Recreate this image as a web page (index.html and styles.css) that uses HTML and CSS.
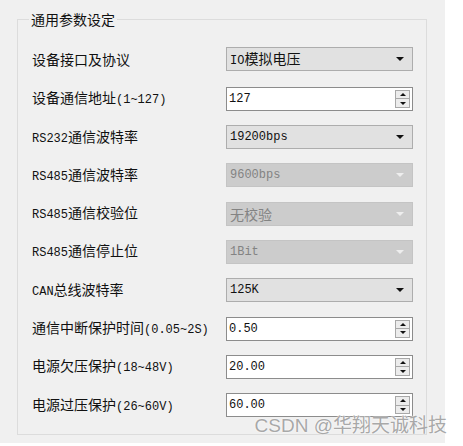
FILE: index.html
```html
<!DOCTYPE html>
<html lang="zh">
<head>
<meta charset="utf-8">
<link rel="stylesheet" href="styles.css">
</head>
<body>
<div class="window">
  <fieldset class="group">
    <legend class="title">通用参数设定</legend>
    <div class="rows">
      <div class="row"><span class="label">设备接口及协议</span><div class="combo"><span class="val"><span class="en">IO</span>模拟电压</span><span class="arrow"></span></div></div>
      <div class="row"><span class="label">设备通信地址<span class="en">(1~127)</span></span><div class="spin"><span class="val en">127</span><span class="btns"><span class="btn"><i class="up"></i></span><span class="btn"><i class="down"></i></span></span></div></div>
      <div class="row"><span class="label"><span class="en">RS232</span>通信波特率</span><div class="combo"><span class="val en">19200bps</span><span class="arrow"></span></div></div>
      <div class="row"><span class="label"><span class="en">RS485</span>通信波特率</span><div class="combo disabled"><span class="val en">9600bps</span><span class="arrow"></span></div></div>
      <div class="row"><span class="label"><span class="en">RS485</span>通信校验位</span><div class="combo disabled"><span class="val">无校验</span><span class="arrow"></span></div></div>
      <div class="row"><span class="label"><span class="en">RS485</span>通信停止位</span><div class="combo disabled"><span class="val en">1Bit</span><span class="arrow"></span></div></div>
      <div class="row"><span class="label"><span class="en">CAN</span>总线波特率</span><div class="combo"><span class="val en">125K</span><span class="arrow"></span></div></div>
      <div class="row"><span class="label">通信中断保护时间<span class="en">(0.05~2S)</span></span><div class="spin"><span class="val en">0.50</span><span class="btns"><span class="btn"><i class="up"></i></span><span class="btn"><i class="down"></i></span></span></div></div>
      <div class="row"><span class="label">电源欠压保护<span class="en">(18~48V)</span></span><div class="spin"><span class="val en">20.00</span><span class="btns"><span class="btn"><i class="up"></i></span><span class="btn"><i class="down"></i></span></span></div></div>
      <div class="row"><span class="label">电源过压保护<span class="en">(26~60V)</span></span><div class="spin"><span class="val en">60.00</span><span class="btns"><span class="btn"><i class="up"></i></span><span class="btn"><i class="down"></i></span></span></div></div>
    </div>
  </fieldset>
  <div class="watermark">CSDN @华翔天诚科技</div>
</div>
</body>
</html>
```
FILE: styles.css
```css
html, body {
  margin: 0;
  padding: 0;
  background: #ffffff;
}
body {
  font-family: "Noto Sans CJK SC", "Noto Sans", sans-serif;
  font-size: 14px;
  color: #111;
}
.window {
  position: relative;
  width: 445px;
  height: 443px;
  box-sizing: border-box;
  background: #f0f0f0;
  padding: 10px 18px 0 17px;
}
.group {
  margin: 0;
  border: 1px solid #dcdcdc;
  padding: 0 13px 18px 14px;
  min-width: 0;
}
.title {
  font-size: 14px;
  line-height: 18px;
  height: 18px;
  padding: 0 2px;
  margin-left: -3px;
  color: #111;
}
.rows {
  display: flex;
  flex-direction: column;
  gap: 14.3px;
  padding-top: 19px;
}
.row {
  display: grid;
  grid-template-columns: 1fr 187px;
  align-items: center;
  height: 24px;
}
.label {
  white-space: nowrap;
  line-height: 24px;
}
.en {
  font-family: "Liberation Mono", monospace;
  font-size: 12px;
}
.combo, .spin {
  position: relative;
  height: 24px;
  box-sizing: border-box;
  display: flex;
  align-items: center;
}
.combo {
  border: 1px solid #adadad;
  background: #e1e1e1;
  padding-left: 3px;
}
.combo.disabled {
  background: #cccccc;
  border-color: #c4c4c4;
  color: #838383;
}
.val {
  flex: 1;
  line-height: 22px;
  white-space: nowrap;
}
.arrow {
  width: 0;
  height: 0;
  border-left: 4px solid transparent;
  border-right: 4px solid transparent;
  border-top: 4px solid #111;
  margin-right: 8px;
}
.combo.disabled .arrow {
  border-top-color: #eeeeee;
}
.spin {
  border: 1px solid #8c8c8c;
  background: #ffffff;
  padding-left: 2px;
  padding-right: 2px;
}
.btns {
  display: flex;
  flex-direction: column;
  width: 15px;
  height: 18px;
  gap: 0;
}
.btn {
  flex: 1;
  border: 1px solid #a8a8a8;
  background: #ececec;
  display: flex;
  align-items: center;
  justify-content: center;
}
.btn + .btn {
  border-top: none;
}
.up, .down {
  display: block;
  width: 0;
  height: 0;
  border-left: 3px solid transparent;
  border-right: 3px solid transparent;
}
.up {
  border-bottom: 3px solid #111;
}
.down {
  border-top: 3px solid #111;
}
.watermark {
  position: absolute;
  right: -2px;
  top: 414px;
  font-family: "Liberation Sans", "Noto Sans CJK SC", sans-serif;
  font-size: 19px;
  line-height: 24px;
  color: #a8a8a8;
  text-shadow: 0 0 2px #ffffff, 0 0 1px #ffffff;
  white-space: nowrap;
}
```
